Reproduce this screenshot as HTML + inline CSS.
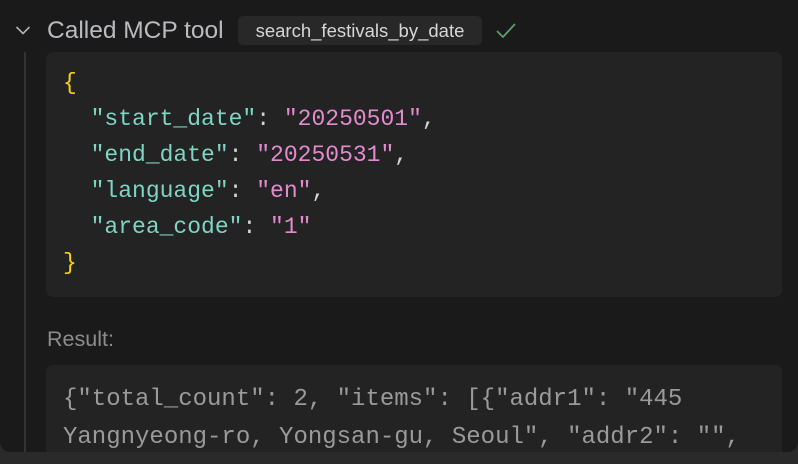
<!DOCTYPE html>
<html><head><meta charset="utf-8"><style>
html,body{margin:0;padding:0;width:798px;height:464px;overflow:hidden;background:#2a2a2a;}
.panel{position:absolute;left:0;top:0;width:798px;height:452px;background:#1a1a1a;border-radius:0 0 10px 10px;overflow:hidden;}
.chev{position:absolute;left:15px;top:24px;}
.title{position:absolute;left:47px;top:16px;font:24.5px "Liberation Sans",sans-serif;color:#b9bbbe;white-space:nowrap;line-height:30px;}
.badge{position:absolute;left:238px;top:16px;width:244px;height:29px;background:#282828;border-radius:5px;font:18.5px "Liberation Sans",sans-serif;color:#d6d6d6;line-height:29px;text-align:center;white-space:nowrap;}
.check{position:absolute;left:495px;top:21px;}
.vline{position:absolute;left:24px;top:52px;width:2px;height:400px;background:#333;}
.code{position:absolute;left:46px;width:736px;background:#232323;border-radius:7px;font:23px "Liberation Mono","DejaVu Sans Mono",monospace;white-space:pre;}
.c1{top:52px;height:245px;}
.ln{position:absolute;left:17px;line-height:36px;height:36px;}
.k{color:#7fd4c4}.s{color:#e48bd0}.b{color:#f5cf1c}.p{color:#d4d4d4}
.res{position:absolute;left:47px;top:327px;font:21.5px "Liberation Sans",sans-serif;color:#8c8c8c;}
.c2{top:365px;height:100px;color:#9a9a9a;font-size:24px;}
</style></head><body>
<div class="panel">
<svg class="chev" width="16" height="12" viewBox="0 0 16 12"><path d="M1.5 3 L8 9.5 L14.5 3" fill="none" stroke="#b0b0b0" stroke-width="1.6"/></svg>
<div class="title">Called MCP tool</div>
<div class="badge">search_festivals_by_date</div>
<svg class="check" width="22" height="20" viewBox="0 0 22 20"><path d="M2 10 L8 16 L20 3" fill="none" stroke="#5e9c6c" stroke-width="1.8"/></svg>
<div class="vline"></div>
<div class="code c1">
<div class="ln" style="top:13px"><span class="b">{</span></div>
<div class="ln" style="top:49px">  <span class="k">"start_date"</span><span class="p">: </span><span class="s">"20250501"</span><span class="p">,</span></div>
<div class="ln" style="top:85px">  <span class="k">"end_date"</span><span class="p">: </span><span class="s">"20250531"</span><span class="p">,</span></div>
<div class="ln" style="top:121px">  <span class="k">"language"</span><span class="p">: </span><span class="s">"en"</span><span class="p">,</span></div>
<div class="ln" style="top:157px">  <span class="k">"area_code"</span><span class="p">: </span><span class="s">"1"</span></div>
<div class="ln" style="top:193px"><span class="b">}</span></div>
</div>
<div class="res">Result:</div>
<div class="code c2">
<div class="ln" style="top:17px">{"total_count": 2, "items": [{"addr1": "445</div>
<div class="ln" style="top:55px">Yangnyeong-ro, Yongsan-gu, Seoul", "addr2": "",</div>
</div>
</div>
</body></html>
